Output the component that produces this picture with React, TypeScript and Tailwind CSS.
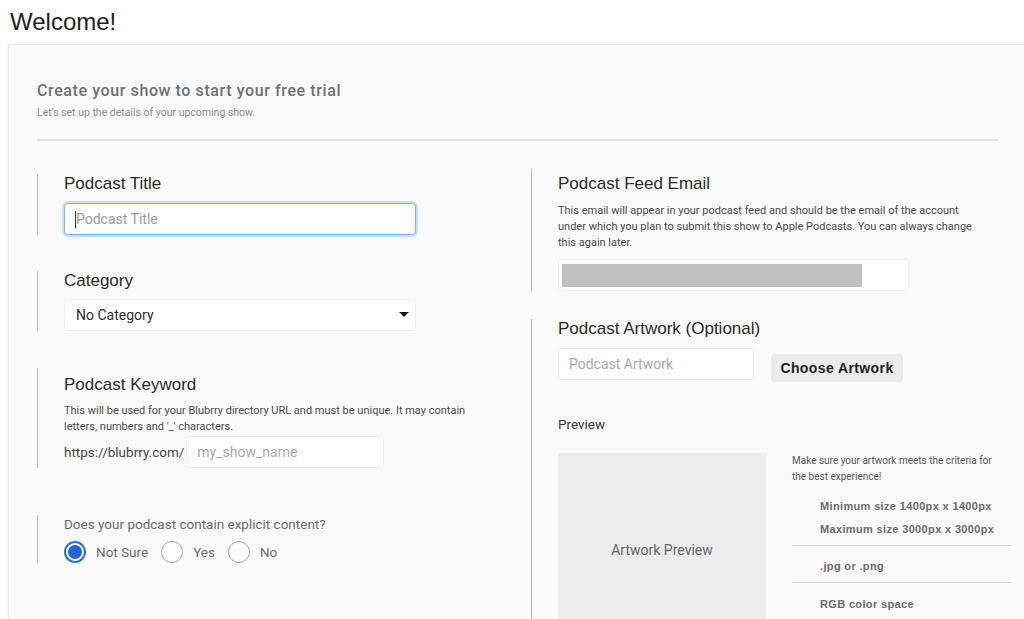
import { useState } from 'react'

const sans = "font-['Liberation_Sans',Arial,sans-serif]"
const roboto = "font-['Roboto',sans-serif]"

function Radio({ label, checked, onClick }: { label: string; checked: boolean; onClick: () => void }) {
  return (
    <button className="flex items-center" onClick={onClick}>
      {checked ? (
        <span className="flex h-[22px] w-[22px] items-center justify-center rounded-full border-2 border-[#2d6fd6] bg-white">
          <span className="h-[14px] w-[14px] rounded-full bg-[#2563d9]" />
        </span>
      ) : (
        <span className="h-[22px] w-[22px] rounded-full border-[1.5px] border-[#a3a3a3] bg-white" />
      )}
      <span className={`${roboto} ml-[10px] mr-[13px] text-[13.5px] text-[#6b6b6b]`}>{label}</span>
    </button>
  )
}

export default function App() {
  const [explicit, setExplicit] = useState('notsure')

  return (
    <div className="min-h-screen bg-white">
      <h1 className={`${sans} pl-[10px] pt-[8px] text-[24px] leading-[28px] text-[#1f1f1f]`}>Welcome!</h1>

      <div className="ml-[8px] mt-[8px] h-[575px] overflow-hidden border-l border-t border-[#ececec] bg-[#fafafa] pl-[28px] shadow-[-1px_0_2px_rgba(0,0,0,0.04)]">
        <div className="mr-[26px] border-b-2 border-[#e2e2e2] pb-[19px] pt-[36px]">
          <h2 className={`${roboto} text-[16px] font-medium leading-[20px] tracking-[0.6px] text-[#6d7177]`}>
            Create your show to start your free trial
          </h2>
          <p className={`${roboto} mt-[5px] text-[10.5px] leading-[14px] text-[#8b8b8b]`}>
            Let's set up the details of your upcoming show.
          </p>
        </div>

        <div className="flex">
          {/* left column */}
          <div className="w-[494px] pt-[33px]">
            <div className="border-l border-[#bdbdbd] pl-[26px]">
              <label className={`${sans} block text-[17px] leading-[20px] text-[#2a2a2a]`}>Podcast Title</label>
              <div className="mt-[9px] flex h-[32px] w-[352px] items-center rounded-[4px] border border-[#7fb3e6] bg-white px-[10px] shadow-[0_0_0_2px_rgba(140,190,240,0.45)]">
                <span className="h-[17px] w-px bg-[#333]" />
                <span className={`${roboto} text-[14px] text-[#9a9a9a]`}>Podcast Title</span>
              </div>
            </div>

            <div className="mt-[36px] border-l border-[#bdbdbd] pl-[26px]">
              <label className={`${sans} block text-[17px] leading-[20px] text-[#2a2a2a]`}>Category</label>
              <div className="mt-[8px] flex h-[32px] w-[352px] items-center justify-between rounded-[3px] border border-[#efefef] bg-white pl-[11px] pr-[6px]">
                <span className={`${roboto} text-[14px] text-[#2e2e2e]`}>No Category</span>
                <svg width="10" height="6" viewBox="0 0 10 6">
                  <path d="M0 0h10L5 5z" fill="#111" />
                </svg>
              </div>
            </div>

            <div className="mt-[37px] border-l border-[#bdbdbd] pl-[26px] pt-[7px]">
              <label className={`${sans} block text-[17px] leading-[20px] text-[#2a2a2a]`}>Podcast Keyword</label>
              <p className={`${roboto} mt-[8px] text-[11px] leading-[16px] text-[#4a4a4a]`}>
                This will be used for your Blubrry directory URL and must be unique. It may contain
                <br />
                letters, numbers and '_' characters.
              </p>
              <div className="mt-px flex items-center">
                <span className={`${roboto} text-[13.5px] text-[#444]`}>https://blubrry.com/</span>
                <div className="ml-[2px] flex h-[32px] w-[198px] items-center rounded-[3px] border border-[#efefef] bg-white px-[10px]">
                  <span className={`${roboto} text-[14px] text-[#aaa]`}>my_show_name</span>
                </div>
              </div>
            </div>

            <div className="mt-[47px] border-l border-[#bdbdbd] pl-[26px]">
              <p className={`${roboto} pt-px text-[13.5px] leading-[16px] text-[#6b6b6b]`}>
                Does your podcast contain explicit content?
              </p>
              <div className="mt-[9px] flex">
                <Radio label="Not Sure" checked={explicit === 'notsure'} onClick={() => setExplicit('notsure')} />
                <Radio label="Yes" checked={explicit === 'yes'} onClick={() => setExplicit('yes')} />
                <Radio label="No" checked={explicit === 'no'} onClick={() => setExplicit('no')} />
              </div>
            </div>
          </div>

          {/* right column */}
          <div className="flex-1 pt-[28px]">
            <div className="border-l border-[#bdbdbd] pl-[26px] pt-[5px]">
              <label className={`${sans} block text-[17px] leading-[20px] text-[#2a2a2a]`}>Podcast Feed Email</label>
              <p className={`${roboto} mt-[9px] text-[11px] leading-[16px] text-[#4a4a4a]`}>
                This email will appear in your podcast feed and should be the email of the account
                <br />
                under which you plan to submit this show to Apple Podcasts. You can always change
                <br />
                this again later.
              </p>
              <div className="mt-[8px] flex h-[32px] w-[351px] items-center rounded-[3px] border border-[#efefef] bg-white pl-[3px]">
                <div className="h-[23px] w-[300px] bg-[#bfbfbf]" />
              </div>
            </div>

            <div className="mt-[28px] border-l border-[#bdbdbd] pb-[20px] pl-[26px]">
              <label className={`${sans} block text-[17px] leading-[20px] text-[#2a2a2a]`}>Podcast Artwork (Optional)</label>
              <div className="mt-[9px] flex items-start">
                <div className="flex h-[32px] w-[196px] items-center rounded-[3px] border border-[#efefef] bg-white px-[10px]">
                  <span className={`${roboto} text-[14px] text-[#aaa]`}>Podcast Artwork</span>
                </div>
                <button className={`${sans} ml-[17px] mt-[6px] h-[28px] w-[132px] rounded-[4px] bg-[#ececec] text-[14px] font-bold tracking-[0.4px] text-[#1f1f1f]`}>
                  Choose Artwork
                </button>
              </div>

              <p className={`${roboto} mt-[34px] text-[13.5px] leading-[16px] text-[#333]`}>Preview</p>

              <div className="mt-[21px] flex">
                <div className="flex h-[208px] w-[208px] shrink-0 items-center justify-center bg-[#ececec]">
                  <span className={`${roboto} -mt-[14px] text-[14px] text-[#666]`}>Artwork Preview</span>
                </div>
                <div className="ml-[26px] w-[219px]">
                  <p className={`${roboto} text-[10px] leading-[16px] text-[#555]`}>
                    Make sure your artwork meets the criteria for
                    <br />
                    the best experience!
                  </p>
                  <div className={`${sans} mt-[10px] pl-[28px] text-[11px] font-bold tracking-[0.35px] text-[#6b6b6b]`}>
                    <p className="leading-[23px]">Minimum size 1400px x 1400px</p>
                    <p className="leading-[23px]">Maximum size 3000px x 3000px</p>
                  </div>
                  <div className="mt-[4px] border-t border-[#dcdcdc]" />
                  <p className={`${sans} pl-[28px] pt-[12px] text-[11px] font-bold leading-[16px] tracking-[0.35px] text-[#6b6b6b]`}>
                    .jpg or .png
                  </p>
                  <div className="mt-[8px] border-t border-[#dcdcdc]" />
                  <p className={`${sans} pl-[28px] pt-[13px] text-[11px] font-bold leading-[16px] tracking-[0.35px] text-[#6b6b6b]`}>
                    RGB color space
                  </p>
                </div>
              </div>
            </div>
          </div>
        </div>
      </div>
    </div>
  )
}
